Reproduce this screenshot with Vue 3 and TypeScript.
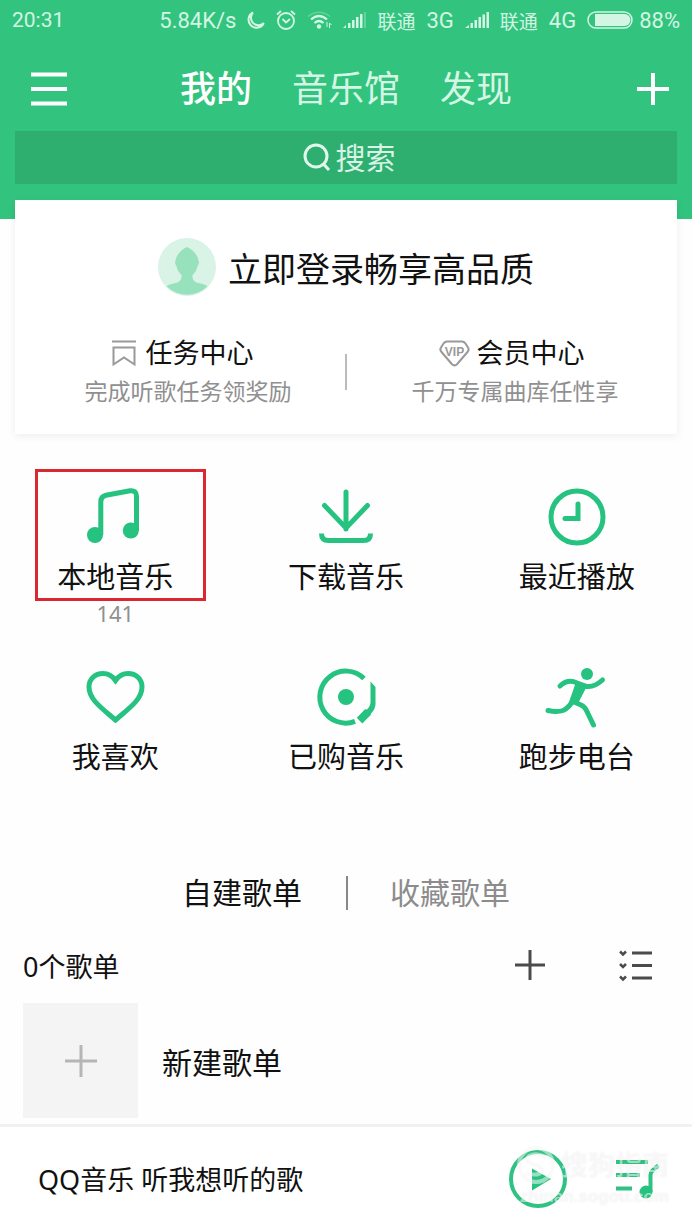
<script setup lang="ts">
import { ref } from 'vue'

interface Entry {
  id: string
  label: string
  count?: number
  marked?: boolean
}

const tabs = ['我的', '音乐馆', '发现']
const activeTab = ref('我的')

const listTabs = ['自建歌单', '收藏歌单']
const activeList = ref('自建歌单')

const entries: Entry[] = [
  { id: 'local', label: '本地音乐', count: 141, marked: true },
  { id: 'download', label: '下载音乐' },
  { id: 'recent', label: '最近播放' },
  { id: 'like', label: '我喜欢' },
  { id: 'bought', label: '已购音乐' },
  { id: 'run', label: '跑步电台' },
]
</script>

<template>
  <div class="page">
    <header class="top">
      <div class="status">
        <span class="time">20:31</span>
        <span>5.84K/s</span>
        <svg width="18" height="20" viewBox="0 0 18 20" class="line">
          <path d="M6 2.5A8 8 0 1 0 16.8 13 7.2 7.2 0 0 1 6 2.5Z" stroke-width="2" />
        </svg>
        <svg width="20" height="22" viewBox="0 0 20 22" class="line">
          <circle cx="10" cy="12" r="8" stroke-width="1.8" />
          <path d="M1 5.5 5 2M19 5.5 15 2M6.5 10l3.5 3.5 4-3.5" stroke-width="1.8" />
        </svg>
        <svg width="25" height="20" viewBox="0 0 25 20" class="line">
          <path d="M1 6.500Q12 -2 23 6.500" stroke-width="1.500" opacity=".3" />
          <path d="M4 9.500Q12 2.500 20 9.500M7.500 13Q12 9 16.500 13" stroke-width="2.200" />
          <circle cx="12" cy="16.500" r="2.200" class="solid" />
          <path d="M20 12v5M22.500 18v-5l2 2" stroke-width="1" />
        </svg>
        <svg width="23" height="18" viewBox="0 0 23 18" class="solid">
          <path d="M0 17l3-3v3zM5 12h2.500v5H5zM9 9h2.500v8H9zM13 6h2.500v11H13zM17 3h2.500v14H17z" />
          <path d="M21 1h2v16h-2z" opacity=".3" />
        </svg>
        <span class="carrier">联通</span>
        <span>3G</span>
        <svg width="24" height="18" viewBox="0 0 24 18" class="solid">
          <path d="M0 17l4-3v3zM5.500 12H8v5H5.500zM9.500 9H12v8H9.500zM13.500 6H16v11h-2.500zM17.500 3.500H20V17h-2.500zM21.500 1H24v16h-2.500z" />
        </svg>
        <span class="carrier">联通</span>
        <span>4G</span>
        <span class="battery">
          <svg width="46" height="18" viewBox="0 0 46 18">
            <rect x="1" y="1" width="44" height="16" rx="8" class="line" stroke-width="1.500" />
            <path d="M8 3h29.500a6 6 0 0 1 0 12H8z" class="solid" />
          </svg>
          88%
        </span>
      </div>

      <nav class="nav">
        <button class="icon-btn menu" aria-label="菜单">
          <svg width="36" height="34" viewBox="0 0 36 34" class="stroke-white">
            <path d="M0 2.500h36M0 17h36M0 31.500h36" />
          </svg>
        </button>
        <div class="tabs">
          <button
            v-for="tab in tabs"
            :key="tab"
            :class="{ active: tab === activeTab }"
            @click="activeTab = tab"
          >{{ tab }}</button>
        </div>
        <button class="icon-btn add" aria-label="添加">
          <svg width="32" height="32" viewBox="0 0 32 32" class="stroke-white">
            <path d="M0 16h32M16 0v32" />
          </svg>
        </button>
      </nav>

      <label class="search">
        <svg width="28" height="30" viewBox="0 0 28 30">
          <circle cx="13" cy="13" r="11" />
          <path d="M20 20.500 26 27" />
        </svg>
        <input type="text" placeholder="搜索" aria-label="搜索" />
      </label>
    </header>

    <section class="card">
      <button class="login">
        <svg width="58" height="58" viewBox="0 0 58 58">
          <circle cx="29" cy="29" r="29" fill="#d9f3e6" />
          <path d="M29 9C22 12 18 18 17.500 23c-1 .500-.500 3 1 5 1 5 3 7 5 9 .500 5-2 7-6 8-4 1-6.500 1.200-9 3.200a29 29 0 0 0 41 0c-2.500-2-5-2.200-9-3.200-4-1-6.500-3-6-8 2-2 4-4 5-9 1.500-2 2-4.500 1-5C40 18 36 12 29 9Z" fill="#98e1bd" />
        </svg>
        <span>立即登录畅享高品质</span>
      </button>
      <div class="centers">
        <a href="#tasks" class="center">
          <span class="center-title">
            <svg width="27" height="26" viewBox="0 0 27 26">
              <path d="M0 1.500h24M1.500 7.500h21v17L12 17.500 1.500 24.500Z" />
            </svg>
            任务中心
          </span>
          <span class="center-note">完成听歌任务领奖励</span>
        </a>
        <i class="rule"></i>
        <a href="#vip" class="center">
          <span class="center-title">
            <svg width="31" height="27" viewBox="0 0 31 27">
              <path d="M8 1.500h15q2 0 3.500 2l2.500 4q1.500 2-.500 4.500L18 24.200q-2.500 2.300-5 0L2.500 12Q.500 9.500 2 7.500l2.500-4Q6 1.500 8 1.500Z" />
              <text x="15.500" y="15.500" text-anchor="middle">VIP</text>
            </svg>
            会员中心
          </span>
          <span class="center-note">千万专属曲库任性享</span>
        </a>
      </div>
    </section>

    <section class="grid">
      <button v-for="entry in entries" :key="entry.id" class="entry">
        <svg width="58" height="58" viewBox="0 0 58 58" class="glyph">
          <template v-if="entry.id === 'local'">
            <path d="M14.800 47V14Q14.800 8.500 20 7.300L44 2.800Q50.500 2 50.500 8V43" />
            <circle cx="9" cy="47" r="8" class="fill" />
            <circle cx="44.800" cy="42.500" r="8" class="fill" />
          </template>
          <template v-else-if="entry.id === 'download'">
            <path d="M29 4v37M7.500 17.500 29 40l21.500-22.500" stroke-linecap="round" />
            <path d="M4.500 45.500q0 7 7 7h35q7 0 7-7" />
          </template>
          <template v-else-if="entry.id === 'recent'">
            <circle cx="29" cy="29" r="26" />
            <path d="M30 16v14.500H17" stroke-linecap="round" />
          </template>
          <path
            v-else-if="entry.id === 'like'"
            d="M29.500 12.500C26 7.500 21.500 5.500 17 5.500 9 5.500 3 11 3 19c0 13 14 22 26.500 33C42 41 56 32 56 19c0-8-6-13.500-14-13.500-4.500 0-9 2-12.500 7Z"
          />
          <template v-else-if="entry.id === 'bought'">
            <path d="M47 10.500A26 26 0 1 0 38 53.400" />
            <circle cx="29" cy="29" r="8" class="fill" />
            <path d="M53.500 13.500l5 5.500v17q0 5-4.500 9.500l-.300 1.500-8.400 8.500-5.500-5.800 8.200-8.500 2 .300Q53.500 38 53.500 34Z" class="fill" />
          </template>
          <template v-else>
            <circle cx="39" cy="6" r="6" class="fill" />
            <path d="M12 18Q20 10.500 29 15L39 18.500Q46 19.500 54.500 12" stroke-linecap="round" />
            <path d="M28 14l10.500 5-9 17.500-8.500-2.500z" class="fill" />
            <path d="M26 31Q21 40 15 42.500 9 44.500 0 42.500M26 34l7 3q4 2 5.500 5.500L45.500 57" stroke-linecap="round" />
          </template>
        </svg>
        <span class="entry-label">{{ entry.label }}</span>
        <span v-if="entry.count" class="entry-count">{{ entry.count }}</span>
        <i v-if="entry.marked" class="mark"></i>
      </button>
    </section>

    <div class="list-tabs">
      <button
        v-for="name in listTabs"
        :key="name"
        :class="{ active: name === activeList }"
        @click="activeList = name"
      >{{ name }}</button>
    </div>

    <div class="list-head">
      <span class="list-count">0个歌单</span>
      <button class="icon-btn" aria-label="新建">
        <svg width="30" height="30" viewBox="0 0 30 30" class="dark"><path d="M0 15h30M15 0v30" /></svg>
      </button>
      <button class="icon-btn" aria-label="管理">
        <svg width="34" height="32" viewBox="0 0 34 32" class="dark">
          <path d="M13 4h20M13 16.500h20M13 29h20" />
          <path d="M1 2.500l3 3 3-3M1 15l3 3 3-3M1 27.500l3 3 3-3" stroke-width="2.500" />
        </svg>
      </button>
    </div>

    <button class="new-list">
      <span class="cover">
        <svg width="32" height="32" viewBox="0 0 32 32"><path d="M0 16h32M16 0v32" /></svg>
      </span>
      <span>新建歌单</span>
    </button>

    <footer class="player">
      <span class="track">QQ音乐 听我想听的歌</span>
      <button class="icon-btn" aria-label="播放">
        <svg width="58" height="58" viewBox="0 0 58 58" class="play">
          <circle cx="29" cy="29" r="27" />
          <path d="M23 18.500 42 29 23 40.500Z" class="fill" />
        </svg>
      </button>
      <button class="icon-btn" aria-label="播放列表">
        <svg width="42" height="40" viewBox="0 0 42 40" class="play">
          <path d="M0 3h32M0 16h24M0 29.500h16M34.500 33V16q0-4 8-9.500" />
          <circle cx="30" cy="33" r="6.500" class="fill" />
        </svg>
      </button>
      <div class="watermark">
        <svg width="40" height="40" viewBox="0 0 40 40">
          <circle cx="20" cy="20" r="17" />
          <path d="M30 12q-10-5-17-1-5 5 4 8 10 3 9 7-3 6-17 2" />
        </svg>
        <b>搜狗指南</b>
        <small>zhinan.sogou.com</small>
      </div>
    </footer>
  </div>
</template>

<style>
body {
  margin: 0;
  background: #fefefe;
}
</style>

<style scoped>
.page {
  display: flex;
  flex-direction: column;
  min-height: 100vh;
  font-family: "Noto Sans", "Noto Sans CJK SC", sans-serif;
  color: #111;
}

button {
  padding: 0;
  border: 0;
  background: none;
  color: inherit;
  font: inherit;
  cursor: pointer;
}

svg {
  display: block;
  flex: none;
  overflow: visible;
  fill: none;
}

.icon-btn {
  display: block;
}

.top {
  padding: 0 15px 35px;
  background: #32c47e;
}

.status {
  display: flex;
  align-items: center;
  gap: 11px;
  height: 40px;
  margin: 0 -3px;
  color: #d3f5e3;
  font-family: Roboto, "Noto Sans CJK SC", sans-serif;
  font-size: 22px;
  white-space: nowrap;
}

.time {
  margin-right: auto;
  font-size: 21px;
}

.carrier {
  font-size: 19px;
}

.battery {
  display: flex;
  align-items: center;
  gap: 6px;
}

.line {
  fill: none;
  stroke: #d3f5e3;
}

.solid {
  fill: #d3f5e3;
  stroke: none;
}

.nav {
  display: grid;
  grid-template-columns: 1fr auto 1fr;
  align-items: center;
  height: 85px;
  padding: 6px 8px 0;
}

.menu {
  justify-self: start;
  margin-left: 8px;
}

.add {
  justify-self: end;
}

.stroke-white {
  stroke: #fff;
  stroke-width: 4;
}

.tabs {
  display: flex;
  gap: 40px;
  color: #d6f6e5;
  font-size: 36px;
  line-height: 48px;
}

.tabs .active {
  color: #fff;
  font-weight: 500;
}

.search {
  display: flex;
  align-items: center;
  justify-content: center;
  gap: 5px;
  height: 53px;
  padding-left: 6px;
  background: #2eaf70;
}

.search svg {
  stroke: #e2f7ec;
  stroke-width: 3;
}

.search input {
  width: 60px;
  padding: 0;
  border: 0;
  outline: 0;
  background: none;
  color: #d9f3e6;
  font: inherit;
  font-size: 30px;
  line-height: 40px;
}

.search input::placeholder {
  color: #d9f3e6;
  opacity: 1;
}

.card {
  margin: -19px 15px 0;
  padding: 38px 0 24px;
  background: #fff;
  box-shadow: 0 2px 8px rgba(0, 0, 0, 0.07);
}

.login {
  display: flex;
  align-items: center;
  justify-content: center;
  gap: 12px;
  width: 100%;
  height: 58px;
  font-size: 34px;
}

.centers {
  display: grid;
  grid-template-columns: 1fr 2px 1fr;
  align-items: center;
  margin-top: 38px;
}

.center {
  justify-self: center;
  padding-left: 16px;
  color: inherit;
  text-decoration: none;
}

.rule + .center {
  padding-left: 6px;
}

.center-title {
  display: flex;
  align-items: center;
  gap: 7px;
  padding-left: 27px;
  font-size: 27px;
  line-height: 38px;
}

.center-title svg {
  stroke: #999;
  stroke-width: 2;
}

.center-title text {
  fill: #999;
  stroke: none;
  font: bold 12px "Liberation Sans", sans-serif;
}

.center-note {
  display: block;
  color: #909090;
  font-size: 23px;
  line-height: 38px;
}

.rule {
  height: 36px;
  background: #bbb;
}

.grid {
  display: grid;
  grid-template-columns: repeat(3, 1fr);
  grid-auto-rows: 180px;
  margin-top: 34px;
}

.entry {
  position: relative;
  display: flex;
  flex-direction: column;
  align-items: center;
  padding-top: 20px;
}

.glyph {
  stroke: #26c280;
  stroke-width: 5;
}

.fill {
  fill: #26c280;
  stroke: none;
}

.entry-label {
  margin-top: 13px;
  font-size: 29px;
  line-height: 36px;
}

.entry-count {
  color: #909090;
  font-size: 22px;
  line-height: 36px;
}

.mark {
  position: absolute;
  top: 1px;
  left: 15%;
  box-sizing: border-box;
  width: 171px;
  height: 132px;
  border: 3px solid #da2730;
}

.list-tabs {
  display: grid;
  grid-template-columns: 1fr 1fr;
  margin-top: 31px;
  padding: 17px 0;
  color: #8c8c8c;
  font-size: 30px;
  line-height: 34px;
}

.list-tabs button {
  padding: 0 44px;
  text-align: right;
}

.list-tabs button + button {
  padding: 0 42px;
  border-left: 2px solid #888;
  text-align: left;
}

.list-tabs .active {
  color: #111;
}

.list-head {
  display: flex;
  align-items: center;
  height: 76px;
  padding: 0 39px 0 23px;
  gap: 74px;
}

.list-count {
  margin-right: auto;
  font-size: 27px;
}

.dark {
  stroke: #4b4b4b;
  stroke-width: 3;
}

.new-list {
  display: flex;
  align-items: center;
  gap: 24px;
  padding: 0 23px;
  font-size: 30px;
}

.cover {
  display: grid;
  place-items: center;
  width: 115px;
  height: 115px;
  background: #f4f4f4;
}

.cover svg {
  stroke: #b5b5b5;
  stroke-width: 3;
}

.player {
  position: relative;
  display: flex;
  align-items: center;
  gap: 49px;
  box-sizing: border-box;
  height: 106px;
  margin-top: auto;
  padding: 0 34px 0 38px;
  border-top: 3px solid #f1f1f1;
  background: #fff;
}

.track {
  margin-right: auto;
  font-size: 27px;
}

.play {
  stroke: #2fc283;
  stroke-width: 4;
}

.watermark {
  position: absolute;
  right: 23px;
  bottom: 21px;
  display: grid;
  grid-template-columns: 40px auto;
  align-items: center;
  column-gap: 5px;
  color: rgba(255, 255, 255, 0.55);
  text-shadow: 0 0 2px rgba(0, 0, 0, 0.07);
  pointer-events: none;
}

.watermark svg {
  stroke: rgba(246, 246, 246, 0.55);
  stroke-width: 4;
}

.watermark b {
  font-size: 27px;
  font-weight: 500;
  line-height: 40px;
}

.watermark small {
  grid-column: 1 / -1;
  justify-self: end;
  font: bold 17px/24px "Liberation Sans", sans-serif;
}
</style>
